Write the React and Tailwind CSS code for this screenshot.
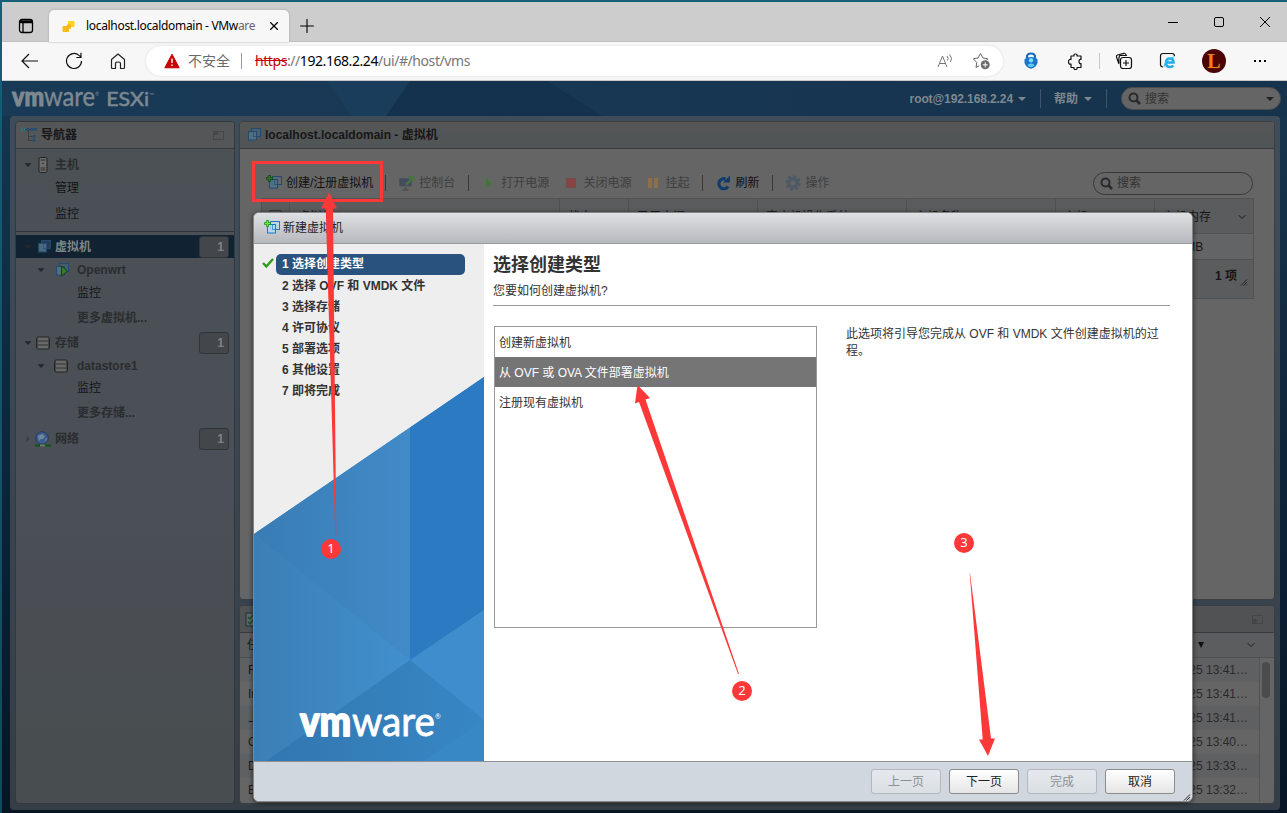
import React from "react";
import { ChevronDown, X, Plus, Minus } from "lucide-react";

const steps = [
  "选择创建类型",
  "选择 OVF 和 VMDK 文件",
  "选择存储",
  "许可协议",
  "部署选项",
  "其他设置",
  "即将完成",
];

const columns = [
  { label: "虚拟机", cls: "w-[270px]" },
  { label: "状态", cls: "w-[69px]" },
  { label: "已用空间", cls: "w-[129px]" },
  { label: "客户机操作系统", cls: "w-[149px]" },
  { label: "主机名称", cls: "w-[149px]" },
  { label: "主机", cls: "w-[99px]" },
];

const tasks = [
  { name: "Find Entity", time: "2022/12/25 13:41…" },
  { name: "Import VApp", time: "2022/12/25 13:41…" },
  { name: "上载磁盘", time: "2022/12/25 13:41…" },
  { name: "Create VM", time: "2022/12/25 13:40…" },
  { name: "Destroy", time: "2022/12/25 13:33…" },
  { name: "Export VM", time: "2022/12/25 13:32…" },
];

function VmwareLogo() {
  return (
    <svg className="ml-[43px] mb-[14px] w-[150px] h-[46px] overflow-visible text-white" viewBox="0 0 150 46" fontFamily="Lato, sans-serif" fill="currentColor" stroke="currentColor" strokeLinejoin="round">
      <text x="3" y="35" fontSize="41">
        <tspan fontWeight="900" strokeWidth="1.800" textLength="51" lengthAdjust="spacingAndGlyphs">vm</tspan>
        <tspan dx="1" strokeWidth=".8" textLength="83" lengthAdjust="spacingAndGlyphs">ware</tspan>
        <tspan dy="-17" fontSize="7" strokeWidth="0">®</tspan>
      </text>
    </svg>
  );
}

function EsxiLogo() {
  return (
    <svg className="relative ml-[9px] w-[150px] h-[34px] overflow-visible" viewBox="0 0 150 34" fontFamily="Lato, sans-serif" fill="currentColor" stroke="currentColor" strokeLinejoin="round">
      <text x="1" y="24" fontSize="26">
        <tspan fontWeight="900" strokeWidth="1" textLength="32" lengthAdjust="spacingAndGlyphs">vm</tspan>
        <tspan strokeWidth=".4" textLength="51" lengthAdjust="spacingAndGlyphs">ware</tspan>
        <tspan dy="-10" fontSize="5" strokeWidth="0">®</tspan>
        <tspan dx="7" dy="10" fontSize="18.500" strokeWidth=".5" textLength="43" lengthAdjust="spacingAndGlyphs">ESXi</tspan>
        <tspan dy="-9" fontSize="6" strokeWidth="0">™</tspan>
      </text>
    </svg>
  );
}

function SearchIcon() {
  return (
    <svg className="w-[13px] h-[13px] mr-1 shrink-0" viewBox="0 0 13 13" fill="none" stroke="#2a2a2a">
      <circle cx="5.500" cy="5.500" r="4" strokeWidth="2" />
      <path d="M8.500 8.500L12 12" strokeWidth="2.600" />
    </svg>
  );
}

function VmIcon({ dim, plus, run }) {
  const line = dim ? "#204a72" : "#1f76c6";
  const fill = dim ? "#547487" : "#a9def8";
  return (
    <svg className="w-4 h-4 shrink-0" viewBox="0 0 16 16" fill="none">
      <rect x="6.500" y="1.500" width="9" height="8" fill={fill} fillOpacity=".35" stroke={line} />
      <rect x="3.500" y="4.500" width="8" height="8.500" fill={fill} fillOpacity=".85" stroke={line} />
      <path d="M8.500 5V9.500H11.500" stroke={line} strokeOpacity=".7" />
      {plus && <path d="M3.500 0V7M0 3.500H7" stroke={dim ? "#134d13" : "#229a1a"} strokeWidth="2.600" />}
      {plus && <path d="M3.500 1V6M1 3.500H6" stroke={dim ? "#2c7a2a" : "#7de35a"} strokeWidth="1" />}
      {run && <path d="M8.500 4L14.500 9L8.500 14Z" fill="#3b7a2e" stroke="#173f10" />}
    </svg>
  );
}

function HostIcon() {
  return (
    <svg className="w-4 h-4" viewBox="0 0 16 16">
      <rect x="4" y=".5" width="8" height="15" rx="1.500" fill="#6c6c6c" stroke="#222" />
      <path d="M5.500 3h5M5.500 11h5M5.500 13h5" stroke="#2c2c2c" />
      <circle cx="8" cy="6.500" r=".7" fill="#222" />
    </svg>
  );
}

function StoreIcon() {
  return (
    <svg className="w-4 h-4" viewBox="0 0 16 16">
      <rect x="1.500" y="2" width="13" height="12" rx="1.500" fill="#676868" stroke="#242424" />
      <path d="M2 6h12M2 10h12" stroke="#333" />
      <path d="M2.500 3v10M13.500 3v10" stroke="#444" />
    </svg>
  );
}

function NetIcon() {
  return (
    <svg className="w-4 h-4" viewBox="0 0 16 16">
      <circle cx="7" cy="7" r="6.300" fill="#3a5d8c" stroke="#20395d" />
      <path d="M3 5l4-2 3 2-2 3-2 0-2 2zM10 8l2-1-1 4z" fill="#72879c" />
      <path d="M0 14.500h16" stroke="#0d560d" strokeWidth="2" />
      <path d="M5 14.500h5" stroke="#777" strokeWidth="2" />
    </svg>
  );
}

function Caret({ right, faint }) {
  return (
    <svg className="w-2 h-2" viewBox="0 0 8 8">
      <path d={right ? "M2.500 1L6 4L2.500 7Z" : "M.5 2.200H7.500L4 6Z"} fill={right ? "#3d4143" : faint ? "#25292e" : "#23272a"} />
    </svg>
  );
}

function Grip() {
  return (
    <svg className="w-2 h-2" viewBox="0 0 8 8">
      <path d="M1 7.500L7 1.500M3.500 7.500L7 4M6 7.500L7 6.500" stroke="#222" />
    </svg>
  );
}

function NavRow({ h, level = 0, icon, caret, label, bold, light, badge, selected, dark }) {
  return (
    <div className={`${h} flex items-center pr-[5px] ${selected ? "bg-[#112233]" : ""}`}>
      <div className={level ? "w-[20px] shrink-0 ml-[13px]" : "w-[19px] shrink-0"}>
        <div className="pl-2">{caret && <Caret right={caret === "right"} faint={selected} />}</div>
      </div>
      <div className={level ? "w-[28px] pl-1" : "w-[20px]"}>{icon}</div>
      <span className={`flex-1 text-xs ${bold ? "font-bold" : ""} ${light ? "text-[#808589]" : dark ? "text-[#141516]" : "text-[#2a2d2f]"}`}>{label}</span>
      {badge && (
        <span className="w-[30px] h-[22px] rounded-[3px] border border-[#303538] bg-[#43474b] text-right pr-1 text-xs font-bold leading-5 text-[#7e8285]">{badge}</span>
      )}
    </div>
  );
}

function Browser() {
  return (
    <div className="font-['Noto_Sans','Noto_Sans_CJK_SC',sans-serif] text-black">
      {/* Tab strip */}
      <div className="h-10 bg-[#cdcdcd] border-b border-[#c0c0c0] flex items-start">
        <svg className="w-4 h-4 ml-4 mt-4" viewBox="0 0 16 16" fill="none" stroke="#000" strokeWidth="1.300">
          <rect x="1.500" y="1.500" width="13" height="13" rx="2.500" />
          <path d="M2 4.500H14M5 5V14" />
          <path d="M2 3.300H14" strokeWidth="2" />
        </svg>
        <div className="ml-[15px] mt-2 h-8 w-[240px] rounded-t-[5px] bg-[#f7f7f7] flex items-center shadow-[0_0_2px_#999]">
          <svg className="ml-[13px] w-[13px] h-[13px]" viewBox="0 0 13 13">
            <rect x="6" y="1" width="6.500" height="6" rx="1" fill="#ffd51f" />
            <rect x=".5" y="6" width="6.500" height="6" rx="1" fill="#fbb91c" />
            <rect x="5" y="4.500" width="4" height="4" fill="#f5b51b" />
          </svg>
          <span className="ml-[11px] w-[172px] overflow-hidden whitespace-nowrap text-xs tracking-[-0.32px]">
            localhost.localdomain - VMw<span className="text-[#666]">are</span>
          </span>
          <X className="ml-[9px]" size={14} strokeWidth={2} />
        </div>
        <Plus className="ml-[7px] mt-[13px]" size={22} strokeWidth={1.2} />
        <div className="flex-1" />
        <svg className="mt-[14px] mr-[34px] w-3 h-3" viewBox="0 0 12 12" stroke="#000"><path d="M1 6.500H11" /></svg>
        <svg className="mt-[14px] mr-[34px] w-3 h-3" viewBox="0 0 12 12" fill="none" stroke="#000">
          <rect x="1.500" y="1.500" width="9" height="9" rx="1.500" />
        </svg>
        <svg className="mt-[14px] mr-4 w-3 h-3" viewBox="0 0 12 12" stroke="#000"><path d="M1 1L11 11M11 1L1 11" /></svg>
      </div>
      {/* Address bar */}
      <div className="h-[39px] bg-[#f7f7f7] border-b border-[#c8c8c8] flex items-center">
        <svg className="ml-[19px] w-[18px] h-4" viewBox="0 0 18 16" fill="none" stroke="#111" strokeWidth="1.200"><path d="M17 8H1M8 1L1 8L8 15" /></svg>
        <svg className="ml-[26px] w-[18px] h-[18px]" viewBox="0 0 18 18" fill="none" stroke="#111" strokeWidth="1.200">
          <path d="M16.500 9A7.500 7.500 0 1 1 14 3.400L16 5M16 .8V5.500H11.300" />
        </svg>
        <svg className="ml-[26px] w-[18px] h-[18px]" viewBox="0 0 18 18" fill="none" stroke="#222" strokeWidth="1.200" strokeLinejoin="round">
          <path d="M2.500 7.500L9 2L15.500 7.500V15.500Q15.500 16.500 14.500 16.500H11.500V11.500Q11.500 10 9 10T6.500 11.500V16.500H3.500Q2.500 16.500 2.500 15.500Z" />
        </svg>
        <div className="ml-[19px] w-[857px] h-[30px] rounded-full bg-white flex items-center shadow-[0_0_3px_#ddd]">
          <svg className="ml-[18px] w-4 h-4" viewBox="0 0 16 16">
            <path d="M8 1.200L15.200 14.800H.8Z" fill="#c80000" stroke="#c80000" strokeLinejoin="round" />
            <path d="M8 5.500V10M8 11.500V13" stroke="#fff" strokeWidth="1.400" />
          </svg>
          <span className="ml-2 w-[42px] whitespace-nowrap text-sm text-[#6b6b6b]">不安全</span>
          <span className="ml-[11px] mr-[13px] w-px h-4 bg-[#999]" />
          <span className="flex-1 text-sm tracking-[-0.43px] text-[#767676]">
            <span className="text-[#c80000] line-through">https</span>://<span className="text-black">192.168.2.24</span>/ui/#/host/vms
          </span>
          <svg className="w-4 h-4" viewBox="0 0 16 16" fill="none" stroke="#777">
            <path d="M1 14L5.500 3L10 14M2.500 10.500H8.500M10 3Q12 5 10.500 7.500M12.500 1.500Q16 5 13.500 9" />
          </svg>
          <svg className="ml-[19px] mr-[13px] w-[18px] h-[18px]" viewBox="0 0 18 18" fill="none" stroke="#666">
            <path d="M7 13.800L4 15.500L4.800 10.500L1.300 6.800L6 6L8.500 1.500L11 6L15.800 6.800L14.500 8.300" strokeLinejoin="round" />
            <circle cx="13.200" cy="12.800" r="4.500" fill="#6b6b6b" stroke="none" />
            <path d="M13.200 10.300V15.300M10.700 12.800H15.700" stroke="#fff" />
          </svg>
        </div>
        <svg className="ml-[20px] w-4 h-[18px]" viewBox="0 0 16 18">
          <path d="M4 6V5Q4 1.500 8 1.500T12 5V6" fill="none" stroke="#1668b8" strokeWidth="2.200" />
          <path d="M1.500 7Q8 3 14.500 7V11Q13 15.500 8 16.800Q3 15.500 1.500 11Z" fill="#1a74cc" />
          <circle cx="8" cy="8.300" r="2.200" fill="#78dcf8" />
          <path d="M4.500 13.500Q5 11.500 8 11.500T11.500 13.500Q8 17 4.500 13.500" fill="#5ccaf2" />
        </svg>
        <svg className="ml-[28px] w-[17px] h-[17px]" viewBox="0 0 17 17" fill="none" stroke="#111" strokeWidth="1.200" strokeLinejoin="round">
          <path d="M4 3H7Q6.500 1 8.500 1T10 3H14V6.500Q12 6 12 8.500T14 10.500V14.500H10Q10.500 16.500 8.500 16.500T7 14.500H4V11Q1.500 11.500 1.500 8.800T4 6.500Z" />
        </svg>
        <span className="ml-[15px] w-px h-4 bg-[#c8c8c8]" />
        <svg className="ml-[15px] w-[18px] h-[18px]" viewBox="0 0 18 18" fill="none" stroke="#111" strokeWidth="1.200">
          <path d="M4 12L1.500 5Q1 3.500 2.500 3L9 1.300Q10.500 1 11.500 3.500M4 11Q3.500 4.500 5 3.500H12" />
          <rect x="5.500" y="5.500" width="11" height="11" rx="2.500" />
          <path d="M11 8V14M8 11H14" />
        </svg>
        <svg className="ml-[26px] w-[18px] h-[18px]" viewBox="0 0 18 18" fill="none">
          <path d="M4 15Q1.500 15 1.500 12.500V4Q1.500 1.500 4 1.500H13Q15.500 1.500 15.500 4" stroke="#111" strokeWidth="1.200" />
          <path d="M7 10.500H14.500Q14.500 6.500 10.800 6.500T7 10.800T11 15Q13 15 14.300 13.500" stroke="#23aeea" strokeWidth="2.600" />
          <path d="M5 15Q5 9 15.500 4.500" stroke="#3bbcf1" />
        </svg>
        <span className="ml-[25px] w-6 h-6 rounded-full bg-[#4c0505] flex items-center justify-center font-['Liberation_Serif',serif] text-[20px] font-bold leading-none text-[#f08418]">L</span>
        <span className="ml-[28px] flex gap-[3px]">
          <i className="w-[2px] h-[2px] bg-black" /><i className="w-[2px] h-[2px] bg-black" /><i className="w-[2px] h-[2px] bg-black" />
        </span>
      </div>
    </div>
  );
}

function HostHeader() {
  return (
    <div className="relative h-[35px] bg-linear-to-r from-[#193a57] to-[#16334d] flex items-center text-[#7e8891]">
      <svg className="absolute inset-0 w-full h-full" viewBox="0 0 1285 35" preserveAspectRatio="none">
        <path d="M325 0H408L384 35H350Z" fill="#1b3d5c" />
        <path d="M408 0H545L600 35H384Z" fill="#132f4b" fillOpacity=".7" />
      </svg>
      <EsxiLogo />
      <div className="flex-1" />
      <div className="relative flex items-center text-xs font-bold">
        <span className="tracking-[-0.1px]">root@192.168.2.24</span>
        <span className="ml-[5px] border-x-4 border-x-transparent border-t-4 border-t-[#7e8891]" />
        <span className="ml-[14px] mr-[13px] w-px h-[19px] bg-[#3f566a]" />
        <span>帮助</span>
        <span className="ml-[6px] border-x-4 border-x-transparent border-t-4 border-t-[#7e8891]" />
        <span className="ml-[14px] mr-[14px] w-px h-[19px] bg-[#3f566a]" />
        <span className="mr-[6px] w-[160px] h-[23px] rounded-full border border-[#4c4c4c] bg-[#656565] flex items-center px-[6px] text-[#333] font-normal">
          <SearchIcon />
          <span className="flex-1">搜索</span>
          <span className="border-x-4 border-x-transparent border-t-4 border-t-[#222]" />
        </span>
      </div>
    </div>
  );
}

function Navigator() {
  return (
    <div className="w-[220px] rounded-[4px] border border-[#34393d] bg-linear-to-b from-[#4b5155] via-[#4b4f57] to-[#484d4f] overflow-hidden">
      <div className="h-[27px] bg-[#555657] border-b border-[#35393b] flex items-center pl-[5px] pr-[10px] text-xs font-bold text-[#171717]">
        <svg className="w-4 h-4 mr-[4px]" viewBox="0 0 16 16" fill="none" stroke="#1c4d79">
          <path d="M4 2.500H6M8 2.500H10M12 2.500H14M7.500 4V13.500H11.500M7.500 9.500H11.500" stroke="#3b3d3f" />
          <rect x=".5" y="1" width="3" height="3" stroke="#31777b" />
          <path d="M6 1.500h2v2H6zM10 1.500h2v2h-2zM13.500 1.500h2v2h-2zM12 8.500h2v2h-2zM12 12.500h2v2h-2z" />
        </svg>
        <span className="flex-1">导航器</span>
        <svg className="w-[11px] h-[9px]" viewBox="0 0 11 9"><rect x=".5" y=".5" width="10" height="8" fill="none" stroke="#454647" /><path d="M1 1h4v3H1z" fill="#484848" /></svg>
      </div>
      <div className="pt-1 pb-[3px] border-b border-[#2f3437] mb-[3px]">
        <NavRow h="h-[23px]" caret="down" icon={<HostIcon />} label="主机" bold />
        <NavRow h="h-[23px]" dark label="管理" />
        <NavRow h="h-[29px]" dark label="监控" />
      </div>
      <NavRow h="h-[23px]" caret="down" icon={<VmIcon dim />} label="虚拟机" bold light selected badge="1" />
      <NavRow h="h-[23px]" level={1} caret="down" icon={<VmIcon dim run />} label="Openwrt" bold />
      <NavRow h="h-[24px]" level={1} dark label="监控" />
      <NavRow h="h-[26px]" level={1} label="更多虚拟机..." bold />
      <NavRow h="h-[24px]" caret="down" icon={<StoreIcon />} label="存储" badge="1" bold />
      <NavRow h="h-[21px]" level={1} caret="down" icon={<StoreIcon />} label="datastore1" bold />
      <NavRow h="h-[24px]" level={1} dark label="监控" />
      <NavRow h="h-[26px]" level={1} label="更多存储..." bold />
      <NavRow h="h-[25px]" caret="right" icon={<NetIcon />} label="网络" badge="1" bold />
    </div>
  );
}

function MainPanel() {
  return (
    <div className="h-[479px] rounded-[4px] border border-[#3b3f42] bg-[#656565] overflow-hidden">
      <div className="h-[27px] bg-linear-to-b from-[#565656] to-[#4f5556] border-b border-[#393c3e] flex items-center pl-[5px] text-xs font-bold text-[#171717]">
        <VmIcon dim />
        <span className="ml-[4px]">localhost.localdomain - 虚拟机</span>
      </div>
      <div className="mt-[20px] ml-[26px] mr-[21px] h-[28px] flex items-center text-xs text-[#3e3e3e]">
        <VmIcon dim plus />
        <span className="ml-[4px] text-[#111]">创建/注册虚拟机</span>
        <span className="ml-[12px] mr-[13px] w-px h-4 bg-[#383838]" />
        <svg className="w-4 h-4 mr-[4px]" viewBox="0 0 16 16"><path d="M.5 3.500h12v7.500h-12z" fill="#444b5e" stroke="#4f545a" /><path d="M3.500 15h6M6.500 12v3" stroke="#505356" strokeWidth="2" /><path d="M6 9l5-5-2-3h6.500v7l-2.500-2.500-5 5z" fill="#4a7343" /></svg>
        控制台
        <span className="ml-[13px] mr-[16px] w-px h-4 bg-[#383838]" />
        <svg className="w-2 h-3 mr-2" viewBox="0 0 8 12"><path d="M.5.5L7.500 6L.5 11.500Z" fill="#47703f" stroke="#547250" /></svg>
        打开电源
        <span className="ml-[17px] mr-[7px] w-[10px] h-[10px] bg-[#8a4343] border border-[#754a4a]" />
        关闭电源
        <span className="ml-[17px] flex gap-[2px]"><i className="w-1 h-[10px] bg-[#8c6f4b]" /><i className="w-1 h-[10px] bg-[#8c6f4b]" /></span>
        <span className="ml-[7px]">挂起</span>
        <span className="ml-[13px] mr-[13px] w-px h-4 bg-[#383838]" />
        <svg className="w-[15px] h-4" viewBox="0 0 15 16" fill="none"><path d="M12 11.500A5 5 0 1 1 9.500 4" stroke="#0f3c6c" strokeWidth="3.200" /><path d="M7 7.500H14V.5Z" fill="#0f3c6c" /></svg>
        <span className="ml-[4px] text-[#111]">刷新</span>
        <span className="ml-[13px] mr-[12px] w-px h-4 bg-[#383838]" />
        <svg className="w-4 h-4" viewBox="0 0 16 16" fill="none" stroke="#4d5965"><circle cx="8" cy="8" r="4.200" strokeWidth="3.200" /><circle cx="8" cy="8" r="6.600" strokeWidth="2.400" strokeDasharray="2.900 2.280" /></svg>
        <span className="ml-[4px]">操作</span>
        <span className="flex-1" />
        <span className="w-[160px] h-[23px] rounded-full border border-[#383838] flex items-center pl-[6px] text-[#333]">
          <SearchIcon />搜索
        </span>
      </div>
      <div className="ml-[21px] mr-[20px] mt-[1px] border border-[#515253] bg-[#5b5c5e] text-xs text-[#161616]">
        <div className="h-[34px] flex">
          <span className="w-[28px] flex items-center justify-center border-r border-[#505152]"><i className="w-[13px] h-[13px] rounded-[2px] border border-[#333]" /></span>
          {columns.map((c) => (
            <span key={c.label} className={`${c.cls} shrink-0 pl-2 leading-[37px] border-r border-[#505152]`}>{c.label}</span>
          ))}
          <span className="flex-1 pl-2 pr-[5px] pt-[2px] flex items-center justify-between">主机内存<ChevronDown size={12} /></span>
        </div>
        <div className="h-[27px] border-y border-[#505152] bg-[#636465] flex justify-end items-center"><span className="w-[91px]">512 MB</span></div>
        <div className="h-[38px] flex items-center justify-end pr-[5px] font-bold">
          <span className="mt-[-6px] mr-[3px]">1 项</span><span className="mt-[5px]"><Grip /></span>
        </div>
      </div>
    </div>
  );
}

function TaskPanel() {
  return (
    <div className="mt-[5px] flex-1 rounded-[4px] border border-[#3b3f42] bg-[#656565] overflow-hidden text-xs text-[#1c1c1c]">
      <div className="h-[27px] bg-[#505253] border-b border-[#393c3e] flex items-center justify-between pl-[5px] pr-[11px]">
        <svg className="w-4 h-4" viewBox="0 0 16 16" fill="none"><rect x="1" y="2" width="13" height="13" fill="#616769" stroke="#1f3038" /><path d="M3 6l2 2 3-4M3 11l2 2 3-4" stroke="#1a4d23" strokeWidth="1.300" /></svg>
        <svg className="w-[11px] h-[9px]" viewBox="0 0 11 9"><rect x=".5" y=".5" width="10" height="8" fill="none" stroke="#444647" /><path d="M1 4h4v4H1z" fill="#444647" /></svg>
      </div>
      <div className="h-[25px] bg-[#5c5d5f] border-b border-[#4d4e50] flex items-center pl-[7px] pr-[17px]">
        <span className="flex-1">任务</span>
        <span className="mr-[41px] border-x-[3.500px] border-x-transparent border-t-[6px] border-t-[#111]" />
        <ChevronDown size={12} />
      </div>
      <div className="flex">
        <div className="flex-1">
          {tasks.map((t) => (
            <div key={t.name} className="h-6 flex items-center justify-between pl-2 pr-[11px] odd:bg-[#5f6062]">
              <span>{t.name}</span>
              <span className="text-[#2a2a2a]">{t.time}</span>
            </div>
          ))}
        </div>
        <div className="w-[15px] border-l border-[#535354] pl-[2px] pt-1"><div className="w-2 h-9 rounded-full bg-[#4b4b4b]" /></div>
      </div>
    </div>
  );
}

function WizardSide() {
  return (
    <div className="relative w-[230px] h-[517px] bg-[#eee]">
      <svg className="absolute inset-0 w-[230px] h-[517px]" viewBox="0 0 230 517">
        <defs>
          <linearGradient id="wa"><stop stopColor="#397cb4" /><stop offset="1" stopColor="#418bc8" /></linearGradient>
          <linearGradient id="wb"><stop stopColor="#3b7fb5" /><stop offset="1" stopColor="#4190ce" /></linearGradient>
          <linearGradient id="wc"><stop stopColor="#3277b0" /><stop offset="1" stopColor="#3787c4" /></linearGradient>
        </defs>
        <path d="M0 290L230 133V517H0Z" fill="#3a84bf" />
        <path d="M0 290L156 183.500V416Z" fill="url(#wa)" />
        <path d="M156 183.500L230 133V366L156 416Z" fill="#2b7ac2" />
        <path d="M0 290L156 416L12 517H0Z" fill="url(#wb)" />
        <path d="M12 517L156 416L230 476V517Z" fill="url(#wc)" />
        <path d="M156 416L230 366V476Z" fill="#3f8dcc" />
        <path d="M169 517L230 476V517Z" fill="#3888c6" />
      </svg>
      <div className="relative h-full flex flex-col pt-[10px]">
        {steps.map((s, i) => (
          <div key={s} className="h-[21px] flex items-center text-xs font-bold">
            <span className="w-[22px] pl-2">
              {i === 0 && (
                <svg className="w-3 h-3 mt-[-4px]" viewBox="0 0 12 12" fill="none"><path d="M1 6L4.300 9.500L11 2" stroke="#2c9b1c" strokeWidth="2.400" /></svg>
              )}
            </span>
            <span className={`w-[189px] h-[21px] pl-[6px] rounded-[5px] ${i === 0 ? "leading-[21px] bg-[#29527f] text-white" : "leading-[22px] text-[#333]"}`}>{i + 1} {s}</span>
          </div>
        ))}
        <div className="flex-1" />
        <VmwareLogo />
      </div>
    </div>
  );
}

function Wizard() {
  const btn = "w-[70px] h-[25px] rounded-[3px] border text-xs";
  const on = "border-[#8c8c8c] bg-linear-to-b from-white to-[#e5e5e5] text-[#222]";
  const off = "border-[#b3b8be] bg-linear-to-b from-[#e5e9ed] to-[#dadfe4] text-[#8b9096]";
  return (
    <div className="absolute left-[253px] top-[212px] w-[940px] h-[590px] rounded-[6px] border border-[#858585] bg-white overflow-hidden shadow-[0_1px_5px_rgba(0,0,0,0.6)] flex flex-col text-xs text-[#333]">
      <div className="h-[31px] shrink-0 bg-linear-to-b from-[#dfe0e4] to-[#b8b9be] border-b border-[#999] flex items-center pl-[10px]">
        <VmIcon plus /><span className="ml-[3px] text-[#222]">新建虚拟机</span>
      </div>
      <div className="h-[517px] flex">
        <WizardSide />
        <div className="flex-1 pl-[9px] pr-[22px] pt-[9px]">
          <h1 className="text-lg leading-6 font-bold">选择创建类型</h1>
          <p className="mt-[5px] h-[24px] leading-[18px] border-b border-[#999]">您要如何创建虚拟机?</p>
          <div className="mt-[20px] flex items-start pl-px">
            <div className="w-[323px] h-[302px] border border-[#999]">
              <div className="h-[30px] leading-[32px] pl-1">创建新虚拟机</div>
              <div className="h-[30px] leading-[32px] pl-1 bg-[#757575] text-white">从 OVF 或 OVA 文件部署虚拟机</div>
              <div className="h-[30px] leading-[32px] pl-1">注册现有虚拟机</div>
            </div>
            <p className="ml-[29px] w-[320px] leading-[17px]">此选项将引导您完成从 OVF 和 VMDK 文件创建虚拟机的过程。</p>
          </div>
        </div>
      </div>
      <div className="flex-1 bg-[#d0d7df] border-t border-[#8e9297] flex items-center justify-end gap-2 pr-px">
        <button className={`${btn} ${off}`}>上一页</button>
        <button className={`${btn} ${on}`}>下一页</button>
        <button className={`${btn} ${off}`}>完成</button>
        <button className={`${btn} ${on}`}>取消</button>
        <span className="self-end"><Grip /></span>
      </div>
    </div>
  );
}

// red callouts over the whole window
function Callouts() {
  return (
    <svg className="absolute inset-0 w-[1287px] h-[813px] pointer-events-none" viewBox="0 0 1287 813" fill="#fd3838">
      <rect x="253.500" y="162.500" width="128" height="38" fill="none" stroke="#fd3838" strokeWidth="3" />
      <path d="M329 192.500L337 208.500H333L336.300 535H335.300L325.700 208.500H321Z" />
      <path d="M637.500 385L650 398L645.500 399.500L739 674H738L639 402L635 403.500Z" />
      <path d="M970 573L991 738.500H995L988 756L979 739.500H982.700L969.700 573Z" />
      <circle cx="331" cy="549" r="10" />
      <circle cx="742" cy="691" r="10" />
      <circle cx="964" cy="543" r="10" />
      <g fill="#fff" fontFamily="Noto Sans" fontSize="13" textAnchor="middle">
        <text x="331" y="553">1</text>
        <text x="742" y="695">2</text>
        <text x="964" y="547">3</text>
      </g>
    </svg>
  );
}

export default function App() {
  return (
    <div className="relative w-[1287px] h-[813px] overflow-hidden bg-linear-to-b from-[#136079] to-[#0b4d5c] pl-[2px] pt-[2px] font-['Liberation_Sans','Noto_Sans_CJK_SC',sans-serif]">
      <Browser />
      <div className="bg-linear-to-b from-[#17364f] to-[#071525] h-[732px]">
        <HostHeader />
        <div className="ml-2 mr-[7px] h-[694px] rounded-[4px] bg-linear-to-b from-[#3f4d5b] to-[#353e47] p-[5px] pb-[6px] flex gap-1">
          <Navigator />
          <div className="flex-1 flex flex-col">
            <MainPanel />
            <TaskPanel />
          </div>
        </div>
      </div>
      <Wizard />
      <Callouts />
    </div>
  );
}
